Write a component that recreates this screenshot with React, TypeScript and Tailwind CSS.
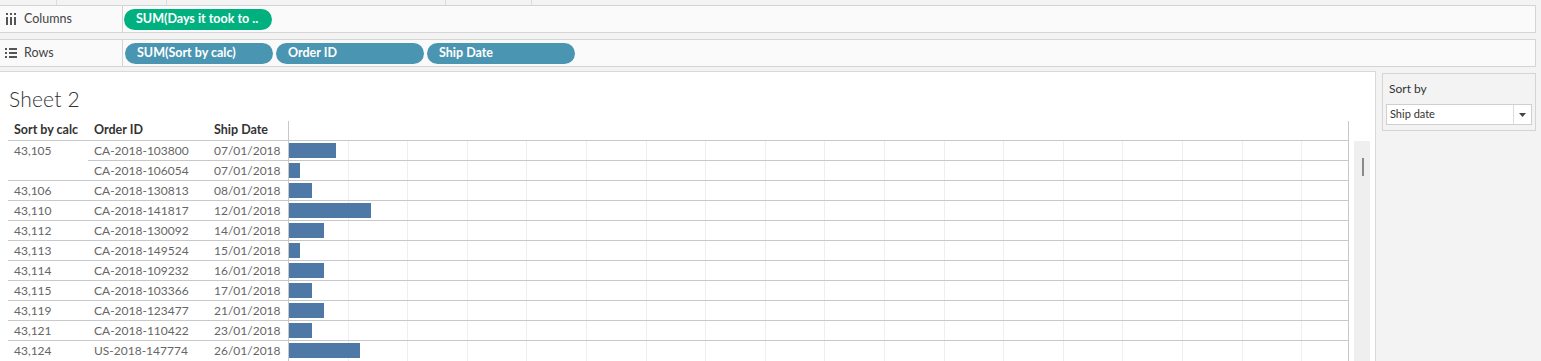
import React from "react";

const rows = [
  { calc: "43,105", id: "CA-2018-103800", date: "07/01/2018", w: 47, sub: false },
  { calc: "", id: "CA-2018-106054", date: "07/01/2018", w: 11, sub: true },
  { calc: "43,106", id: "CA-2018-130813", date: "08/01/2018", w: 23, sub: false },
  { calc: "43,110", id: "CA-2018-141817", date: "12/01/2018", w: 82, sub: false },
  { calc: "43,112", id: "CA-2018-130092", date: "14/01/2018", w: 35, sub: false },
  { calc: "43,113", id: "CA-2018-149524", date: "15/01/2018", w: 11, sub: false },
  { calc: "43,114", id: "CA-2018-109232", date: "16/01/2018", w: 35, sub: false },
  { calc: "43,115", id: "CA-2018-103366", date: "17/01/2018", w: 23, sub: false },
  { calc: "43,119", id: "CA-2018-123477", date: "21/01/2018", w: 35, sub: false },
  { calc: "43,121", id: "CA-2018-110422", date: "23/01/2018", w: 23, sub: false },
  { calc: "43,124", id: "US-2018-147774", date: "26/01/2018", w: 71, sub: false },
];

const grid = Array.from({ length: 17 }, (_, i) => Math.round((i + 1) * 59.6));

function ColumnsIcon() {
  return (
    <svg width="10" height="12" viewBox="0 0 10 12" className="block">
      <rect x="0" y="0" width="2" height="2" fill="#555" />
      <rect x="4" y="0" width="2" height="2" fill="#555" />
      <rect x="8" y="0" width="2" height="2" fill="#555" />
      <rect x="0" y="4" width="2" height="8" fill="#555" />
      <rect x="4" y="4" width="2" height="8" fill="#555" />
      <rect x="8" y="4" width="2" height="8" fill="#555" />
    </svg>
  );
}

function RowsIcon() {
  return (
    <svg width="12" height="10" viewBox="0 0 12 10" className="block">
      <rect x="0" y="0" width="2" height="2" fill="#555" />
      <rect x="0" y="4" width="2" height="2" fill="#555" />
      <rect x="0" y="8" width="2" height="2" fill="#555" />
      <rect x="4" y="0" width="8" height="2" fill="#555" />
      <rect x="4" y="4" width="8" height="2" fill="#555" />
      <rect x="4" y="8" width="8" height="2" fill="#555" />
    </svg>
  );
}

function Pill({ label, green }: { label: string; green?: boolean }) {
  return (
    <div
      className={`h-[21px] w-[148px] rounded-full flex items-center pl-[12px] text-white text-[12.5px] font-bold leading-none ${
        green ? "bg-[#00b07f]" : "bg-[#4a96b2]"
      }`}
    >
      {label}
    </div>
  );
}

export default function App() {
  return (
    <div
      className="w-[1541px] h-[361px] overflow-hidden bg-[#f3f3f3] flex flex-col"
      style={{ fontFamily: "Lato, 'Liberation Sans', sans-serif" }}
    >
      {/* top band with ticks */}
      <div className="h-[5px] flex shrink-0">
        <div className="w-[57px] border-r border-[#dcdcdc]" />
        <div className="w-[110px] border-r border-[#dcdcdc]" />
        <div className="w-[279px] border-r border-[#dcdcdc]" />
        <div className="w-[86px] border-r border-[#dcdcdc]" />
      </div>

      {/* Columns shelf */}
      <div className="h-[28px] w-[1536px] shrink-0 border border-l-0 border-[#d4d4d4] bg-[#fafafa] flex">
        <div className="w-[123px] border-r border-[#d4d4d4] flex items-center pl-[6px] gap-[8px]">
          <ColumnsIcon />
          <span className="text-[12.5px] text-[#444]">Columns</span>
        </div>
        <div className="flex items-center pl-[1px] gap-[3px]">
          <Pill label="SUM(Days it took to .." green />
        </div>
      </div>

      <div className="h-[6px] shrink-0" />

      {/* Rows shelf */}
      <div className="h-[28px] w-[1536px] shrink-0 border border-l-0 border-[#d4d4d4] bg-[#fafafa] flex">
        <div className="w-[123px] border-r border-[#d4d4d4] flex items-center pl-[5px] gap-[7px]">
          <RowsIcon />
          <span className="text-[12.5px] text-[#444]">Rows</span>
        </div>
        <div className="flex items-center pl-[2px] gap-[3px]">
          <Pill label="SUM(Sort by calc)" />
          <Pill label="Order ID" />
          <Pill label="Ship Date" />
        </div>
      </div>

      <div className="h-[4px] shrink-0" />

      {/* bottom area */}
      <div className="flex flex-1 min-h-0">
        {/* worksheet */}
        <div className="w-[1376px] bg-white border-t border-r border-[#d9d9d9] flex flex-col">
          <div className="h-[49px] pl-[9px] pt-[16px] text-[21px] font-light text-[#333] leading-none tracking-[0.2px]">
            Sheet 2
          </div>
          <div className="flex">
            <div className="w-[8px] shrink-0" />
            <div className="w-[1341px] flex flex-col">
              {/* header */}
              <div className="h-[20px] flex text-[12.5px] font-bold text-[#333] border-b border-[#c8c8c8]">
                <div className="w-[80px] pl-[6px] flex items-center">Sort by calc</div>
                <div className="w-[120px] pl-[6px] flex items-center">Order ID</div>
                <div className="w-[80px] pl-[6px] flex items-center">Ship Date</div>
                <div className="flex-1 border-l border-r border-[#c8c8c8]" />
              </div>
              {rows.map((r, i) => (
                <div key={i} className="h-[20px] flex text-[12px] text-[#666]">
                  <div
                    className={`w-[80px] pl-[6px] flex items-center ${
                      i === 0 || i === rows.length - 1 ? "" : "border-b border-[#c8c8c8]"
                    }`}
                  >
                    {r.calc}
                  </div>
                  <div
                    className={`flex-1 flex ${
                      i === rows.length - 1 ? "" : "border-b border-[#c8c8c8]"
                    }`}
                  >
                    <div className="w-[120px] pl-[6px] flex items-center">{r.id}</div>
                    <div className="w-[80px] pl-[6px] flex items-center">{r.date}</div>
                    <div className="flex-1 border-l border-r border-[#c8c8c8] relative">
                      {grid.map((g) => (
                        <div
                          key={g}
                          className="absolute top-0 bottom-0 w-px bg-[#efefef]"
                          style={{ left: g - 1 }}
                        />
                      ))}
                      <div
                        className="relative mt-[2px] h-[15px] bg-[#4e79a7]"
                        style={{ width: r.w }}
                      />
                    </div>
                  </div>
                </div>
              ))}
            </div>
            {/* scrollbar */}
            <div className="w-[5px] shrink-0" />
            <div className="w-[16px] shrink-0 flex flex-col">
              <div className="h-[20px]" />
              <div className="flex-1 bg-[#efefef] flex justify-center pt-[17px] pl-[1px]">
                <div className="w-[2px] h-[18px] bg-[#8a8a8a]" />
              </div>
            </div>
          </div>
        </div>

        {/* right panel */}
        <div className="flex-1 pl-[6px] pt-[2px]">
          <div className="w-[154px] h-[58px] border border-[#d4d4d4] flex flex-col px-[3px]">
            <div className="h-[30px] pl-[3px] flex items-center text-[12px] text-[#333]">Sort by</div>
            <div className="h-[21px] bg-white border border-[#cfcfcf] flex">
              <div className="flex-1 pl-[3px] flex items-center text-[11px] text-[#333]">Ship date</div>
              <div className="w-[18px] border-l border-[#dcdcdc] flex items-center justify-center">
                <svg width="7" height="4" viewBox="0 0 7 4">
                  <path d="M0 0 H7 L3.5 4 Z" fill="#444" />
                </svg>
              </div>
            </div>
          </div>
        </div>
      </div>
    </div>
  );
}
